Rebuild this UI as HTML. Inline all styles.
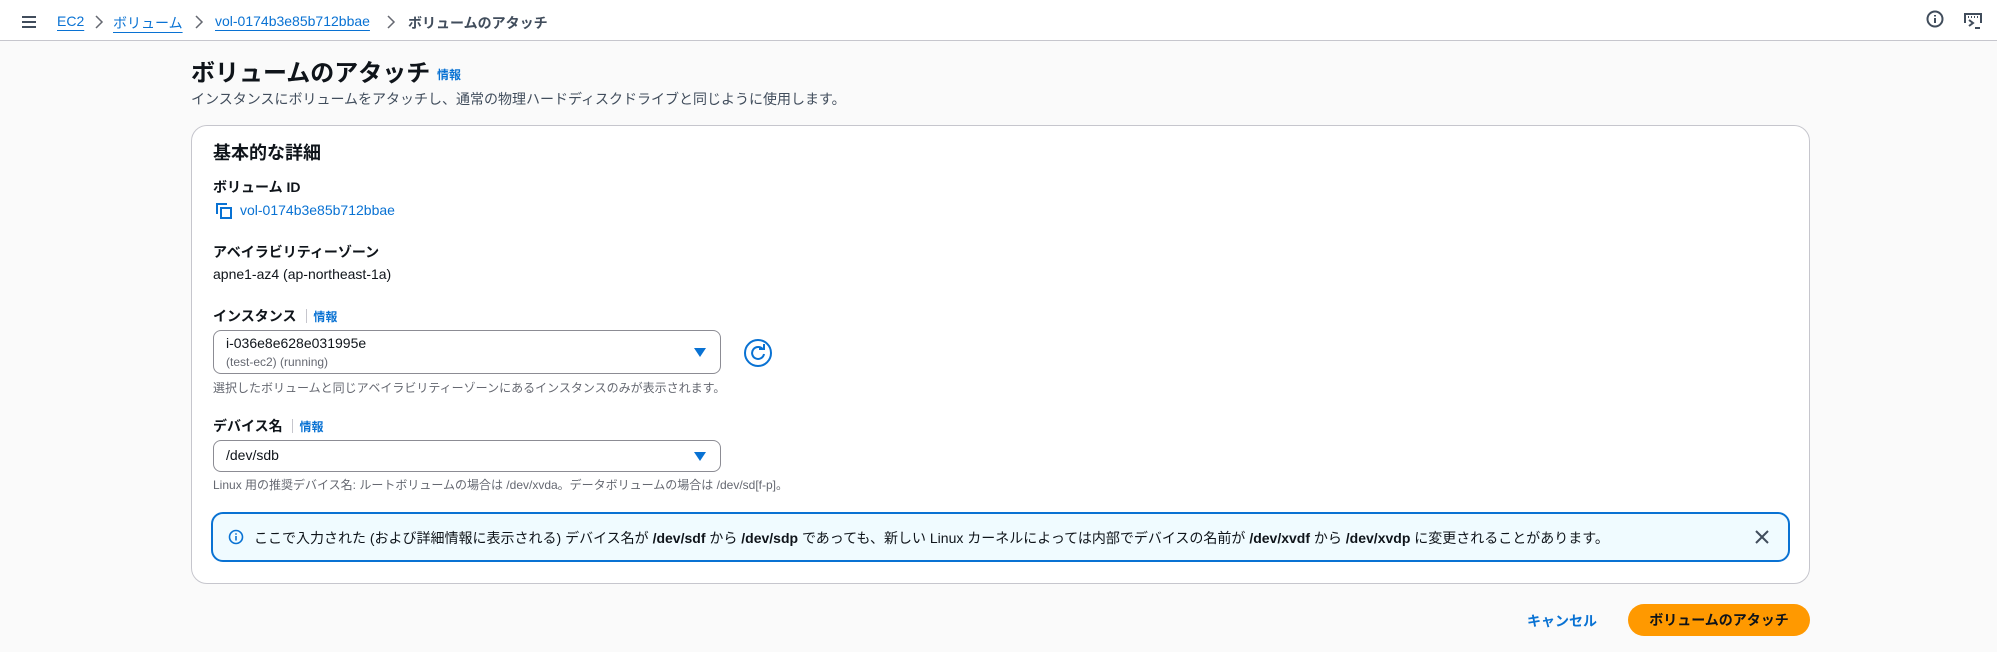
<!DOCTYPE html>
<html><head><meta charset="utf-8"><style>
*{box-sizing:border-box;margin:0;padding:0}
body{width:1997px;height:652px;background:#fafafa;font-family:"Liberation Sans","Noto Sans CJK JP",sans-serif;color:#0f141a;font-size:14px;position:relative;overflow:hidden}
.a{position:absolute;white-space:nowrap}
.top{position:absolute;left:0;top:0;width:1997px;height:41px;background:#fff;border-bottom:1px solid #c6c6cd}
.link{color:#0972d3}
.bc{color:#0972d3;text-decoration:underline;text-underline-offset:4px}
.lbl{font-weight:bold;font-size:14px}
.info{color:#0972d3;font-weight:bold;font-size:12px}
.sel{position:absolute;left:213px;width:508px;border:1px solid #8c8c94;border-radius:8px;background:#fff}
.tri{position:absolute;right:14px;width:0;height:0;border-left:6px solid transparent;border-right:6px solid transparent;border-top:9px solid #0972d3}
.help{font-size:12px;color:#656871}
</style></head><body>
<div class="top"></div>
<svg class="a" style="left:21px;top:15px" width="16" height="14" viewBox="0 0 16 14"><path d="M1 2h14M1 7h14M1 12h14" stroke="#414d5c" stroke-width="2"/></svg>
<div class="a" style="left:57px;top:13px;font-size:14px"><span class="bc">EC2</span></div>
<svg class="a" style="left:94px;top:15px" width="10" height="14"><path d="M2 1l6 6-6 6" stroke="#656871" stroke-width="1.5" fill="none"/></svg>
<div class="a" style="left:113px;top:13px"><span class="bc">ボリューム</span></div>
<svg class="a" style="left:194px;top:15px" width="10" height="14"><path d="M2 1l6 6-6 6" stroke="#656871" stroke-width="1.5" fill="none"/></svg>
<div class="a" style="left:215px;top:13px"><span class="bc">vol-0174b3e85b712bbae</span></div>
<svg class="a" style="left:386px;top:15px" width="10" height="14"><path d="M2 1l6 6-6 6" stroke="#656871" stroke-width="1.5" fill="none"/></svg>
<div class="a" style="left:408px;top:13px;color:#414d5c;font-weight:bold">ボリュームのアタッチ</div>
<svg class="a" style="left:1926px;top:10px" width="18" height="18" viewBox="0 0 18 18"><circle cx="9" cy="9" r="7.5" stroke="#414d5c" stroke-width="2" fill="none"/><path d="M9 8v5M9 5v1.5" stroke="#414d5c" stroke-width="2"/></svg>
<svg class="a" style="left:1963px;top:12px" width="20" height="18" viewBox="0 0 20 18"><path d="M2 11V2h16v9" stroke="#414d5c" stroke-width="2" fill="none"/><path d="M5 5h1M8 5h1M11 5h1M14 5h1" stroke="#414d5c" stroke-width="2"/><path d="M6 8l4 3-4 3" stroke="#414d5c" stroke-width="2" fill="none"/><path d="M12 16h5" stroke="#414d5c" stroke-width="2"/></svg>

<div class="a" style="left:191px;top:53px;font-size:24px;font-weight:bold">ボリュームのアタッチ <span class="info" style="font-size:12px;vertical-align:middle">情報</span></div>
<div class="a" style="left:191px;top:89px;color:#414d5c">インスタンスにボリュームをアタッチし、通常の物理ハードディスクドライブと同じように使用します。</div>

<div class="a" style="left:191px;top:125px;width:1619px;height:459px;background:#fff;border:1px solid #c6c6cd;border-radius:16px"></div>
<div class="a" style="left:213px;top:139px;font-size:18px;font-weight:bold">基本的な詳細</div>
<div class="a lbl" style="left:213px;top:177px">ボリューム ID</div>
<svg class="a" style="left:215px;top:202px" width="18" height="18" viewBox="0 0 18 18"><path d="M2 12V2h10" stroke="#0972d3" stroke-width="2" fill="none"/><rect x="6" y="6" width="10" height="10" stroke="#0972d3" stroke-width="2" fill="none"/></svg>
<div class="a link" style="left:240px;top:202px">vol-0174b3e85b712bbae</div>
<div class="a lbl" style="left:213px;top:242px">アベイラビリティーゾーン</div>
<div class="a" style="left:213px;top:266px">apne1-az4 (ap-northeast-1a)</div>
<div class="a lbl" style="left:213px;top:306px">インスタンス <span style="display:inline-block;width:1px;height:14px;background:#c6c6cd;margin:0 6px -2px"></span><span class="info">情報</span></div>
<div class="sel" style="top:330px;height:44px"><div class="a" style="left:12px;top:4px">i-036e8e628e031995e</div><div class="a help" style="left:12px;top:24px">(test-ec2) (running)</div><div class="tri" style="top:17px"></div></div>
<svg class="a" style="left:743px;top:338px" width="30" height="30" viewBox="0 0 30 30"><circle cx="15" cy="15" r="13" stroke="#0972d3" stroke-width="2" fill="none"/><path d="M20 11.5A6 6 0 1 0 21 16" stroke="#0972d3" stroke-width="2" fill="none"/><path d="M16 11h5V6" stroke="#0972d3" stroke-width="2" fill="none"/></svg>
<div class="a help" style="left:213px;top:379px">選択したボリュームと同じアベイラビリティーゾーンにあるインスタンスのみが表示されます。</div>
<div class="a lbl" style="left:213px;top:416px">デバイス名 <span style="display:inline-block;width:1px;height:14px;background:#c6c6cd;margin:0 6px -2px"></span><span class="info">情報</span></div>
<div class="sel" style="top:440px;height:32px"><div class="a" style="left:12px;top:6px">/dev/sdb</div><div class="tri" style="top:11px"></div></div>
<div class="a help" style="left:213px;top:476px">Linux 用の推奨デバイス名: ルートボリュームの場合は /dev/xvda。データボリュームの場合は /dev/sd[f-p]。</div>

<div class="a" style="left:211px;top:512px;width:1579px;height:50px;background:#f0fbff;border:2px solid #0972d3;border-radius:12px"></div>
<svg class="a" style="left:228px;top:529px" width="16" height="16" viewBox="0 0 16 16"><circle cx="8" cy="8" r="6.5" stroke="#0972d3" stroke-width="1.6" fill="none"/><path d="M8 7v4.5M8 4.3v1.4" stroke="#0972d3" stroke-width="1.6"/></svg>
<div class="a" style="left:254px;top:528px">ここで入力された (および詳細情報に表示される) デバイス名が <b>/dev/sdf</b> から <b>/dev/sdp</b> であっても、新しい Linux カーネルによっては内部でデバイスの名前が <b>/dev/xvdf</b> から <b>/dev/xvdp</b> に変更されることがあります。</div>
<svg class="a" style="left:1754px;top:529px" width="16" height="16" viewBox="0 0 16 16"><path d="M2 2l12 12M14 2L2 14" stroke="#414d5c" stroke-width="2"/></svg>

<div class="a link" style="left:1527px;top:611px;font-weight:bold">キャンセル</div>
<div class="a" style="left:1628px;top:604px;width:182px;height:32px;background:#ff9900;border-radius:16px;font-weight:bold;text-align:center;line-height:32px">ボリュームのアタッチ</div>
</body></html>
